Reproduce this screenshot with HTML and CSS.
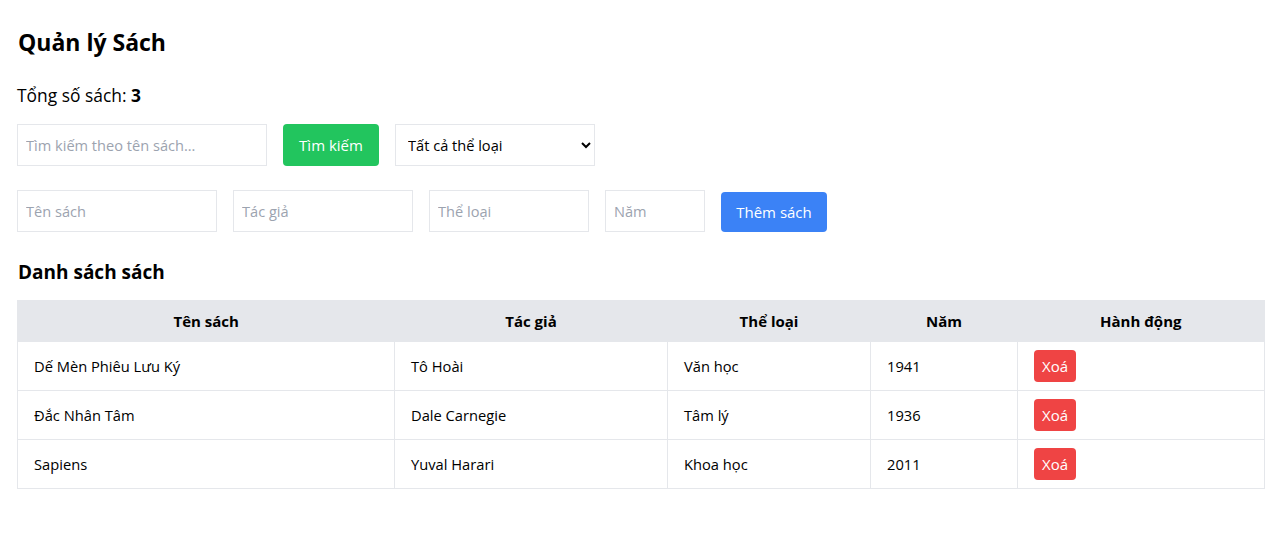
FILE: index.html
```html
<!DOCTYPE html>
<html lang="vi">
<head>
<meta charset="utf-8">
<title>Quản lý Sách</title>
<link rel="stylesheet" href="styles.css">
</head>
<body>
<div class="app">
  <h1 class="title">Quản lý Sách</h1>
  <p class="stats">Tổng số sách: <strong>3</strong></p>

  <div class="search-row">
    <input class="field field-search" type="text" placeholder="Tìm kiếm theo tên sách...">
    <button class="btn btn-green">Tìm kiếm</button>
    <select class="field field-select">
      <option>Tất cả thể loại</option>
      <option>Văn học</option>
      <option>Tâm lý</option>
      <option>Khoa học</option>
    </select>
  </div>

  <div class="form-row">
    <input class="field field-name" type="text" placeholder="Tên sách">
    <input class="field field-author" type="text" placeholder="Tác giả">
    <input class="field field-genre" type="text" placeholder="Thể loại">
    <input class="field field-year" type="text" placeholder="Năm">
    <button class="btn btn-blue">Thêm sách</button>
  </div>

  <h2 class="subtitle">Danh sách sách</h2>

  <table class="books">
    <colgroup>
      <col class="c1"><col class="c2"><col class="c3"><col class="c4"><col class="c5">
    </colgroup>
    <thead>
      <tr><th>Tên sách</th><th>Tác giả</th><th>Thể loại</th><th>Năm</th><th>Hành động</th></tr>
    </thead>
    <tbody>
      <tr><td>Dế Mèn Phiêu Lưu Ký</td><td>Tô Hoài</td><td>Văn học</td><td>1941</td><td><button class="btn-del">Xoá</button></td></tr>
      <tr><td>Đắc Nhân Tâm</td><td>Dale Carnegie</td><td>Tâm lý</td><td>1936</td><td><button class="btn-del">Xoá</button></td></tr>
      <tr><td>Sapiens</td><td>Yuval Harari</td><td>Khoa học</td><td>2011</td><td><button class="btn-del">Xoá</button></td></tr>
    </tbody>
  </table>
</div>
</body>
</html>
```
FILE: styles.css
```css
* { box-sizing: border-box; }
body {
  margin: 0;
  font-family: "Open Sans", "Noto Sans", sans-serif;
  color: #000;
  background: #fff;
}
.app {
  padding: 26px 21px 20px 17px;
}
.title {
  margin: 0 0 25px 1px;
  font-size: 23px;
  line-height: 32px;
  font-weight: 700;
}
.stats {
  margin: 0 0 17px 0;
  font-size: 17.4px;
  line-height: 24px;
}
.search-row, .form-row {
  display: flex;
  gap: 16px;
  align-items: flex-end;
}
.search-row { margin-bottom: 24px; }
.form-row { margin-bottom: 26px; }
.field {
  height: 42px;
  border: 1px solid #e5e7eb;
  background: #fff;
  padding: 0 8px;
  font-family: inherit;
  font-size: 14.6px;
  color: #000;
  border-radius: 0;
  outline: none;
}
.field::placeholder { color: #9ca3af; }
.field-search { width: 250px; }
.field-select { width: 200px; padding-left: 8px; }
.field-name { width: 200px; }
.field-author { width: 180px; }
.field-genre { width: 160px; }
.field-year { width: 100px; }
.btn {
  border: none;
  border-radius: 4px;
  color: #fff;
  font-family: inherit;
  font-size: 15px;
  padding: 0 16px;
  white-space: nowrap;
}
.btn-green { background: #22c55e; height: 42px; width: 96px; }
.btn-blue { background: #3b82f6; height: 40px; width: 106px; padding: 0; }
.subtitle {
  margin: 0 0 14px 1px;
  font-size: 19px;
  line-height: 28px;
  font-weight: 700;
}
.books {
  width: 1247px;
  border-collapse: collapse;
  table-layout: fixed;
  border: 1px solid #e5e7eb;
  font-size: 14.7px;
}
.c1 { width: 377px; }
.c2 { width: 273px; }
.c3 { width: 203px; }
.c4 { width: 147px; }
.c5 { width: 247px; }
.books th {
  background: #e5e7eb;
  height: 41px;
  font-weight: 700;
  font-size: 15px;
  text-align: center;
  padding: 0 16px;
}
.books td {
  height: 49px;
  padding: 0 16px;
  border: 1px solid #e5e7eb;
  vertical-align: middle;
}
.btn-del {
  background: #ef4444;
  color: #fff;
  border: none;
  border-radius: 4px;
  height: 32px;
  padding: 0 8px;
  font-family: inherit;
  font-size: 15px;
}
```
